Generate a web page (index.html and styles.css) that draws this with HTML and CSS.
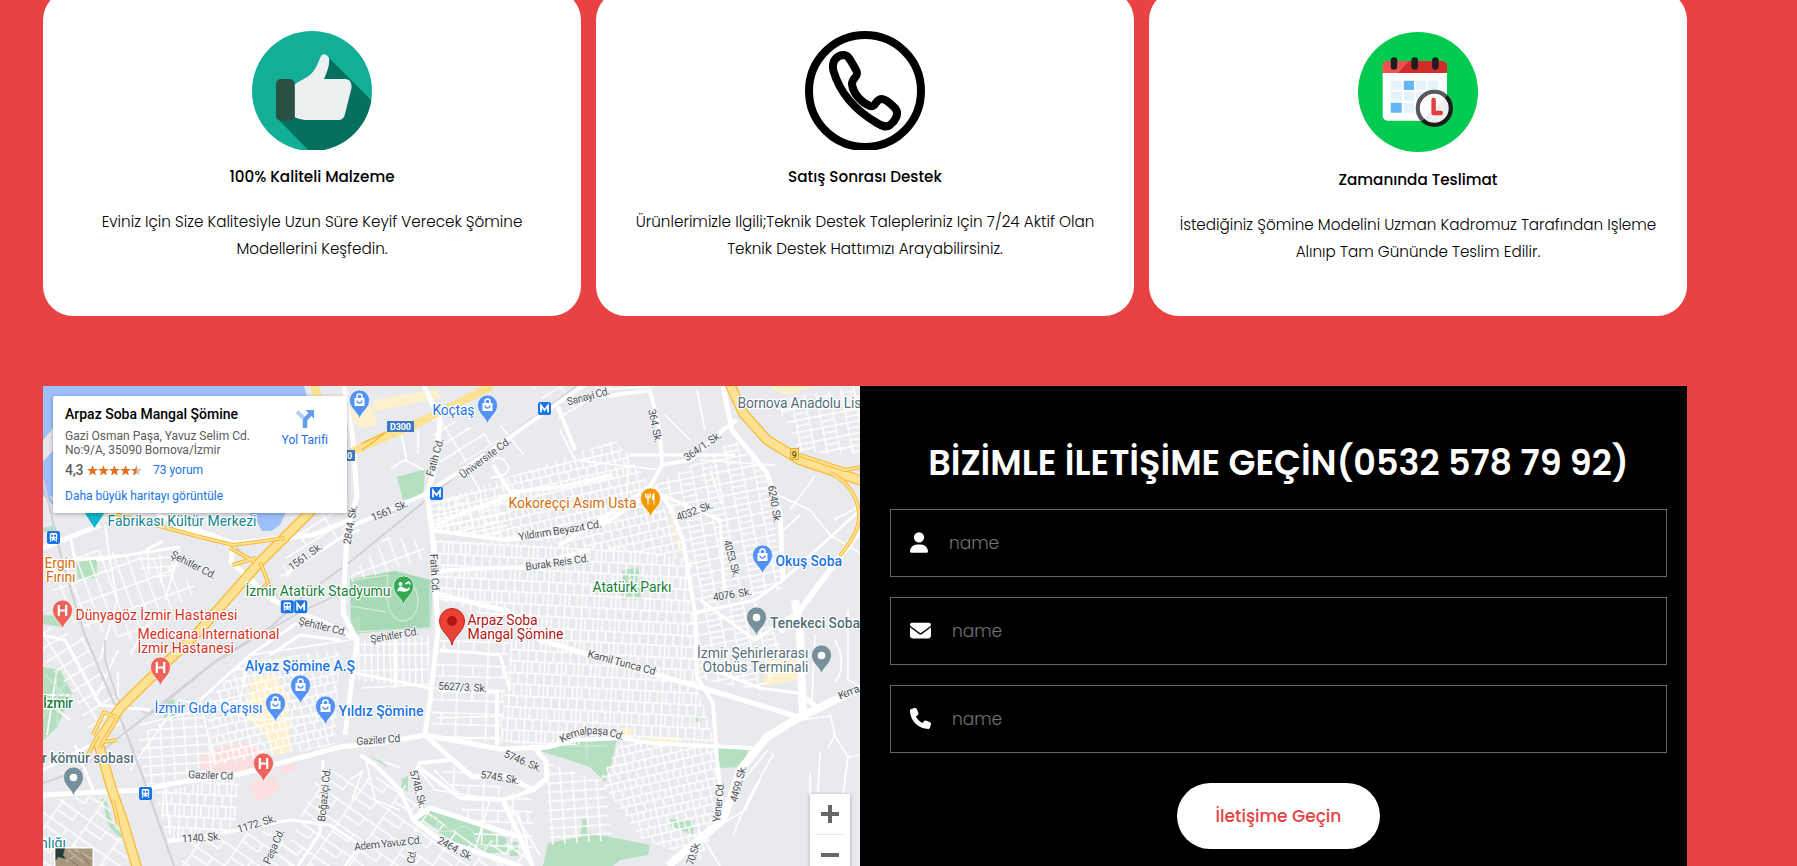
FILE: index.html
```html
<!DOCTYPE html>
<html lang="tr">
<head>
<meta charset="utf-8">
<title>Arpaz Soba Mangal Şömine</title>
<link rel="stylesheet" href="styles.css">
</head>
<body>
<main class="page">
  <section class="features">
    <article class="card card-quality">
      <svg class="card-icon" viewBox="0 0 120 120" width="120" height="120">
        <defs><clipPath id="disc"><circle cx="60" cy="60" r="60"/></clipPath></defs>
        <g clip-path="url(#disc)">
          <rect width="120" height="119" fill="#12ae96"/>
          <path d="M76 26 L124 74 V119 H56 L26 88 L44 60 Z" fill="#06705e"/>
        </g>
        <path d="M42.5 54 C46 50 54 48 59 43 C65 37 67 29 69 25 C71 22 75 23 77 27 C78 34 75 41 72 48 H93 C98 48 100 52 99.500 57 L93 83 C92 87 90 89 86 89 H56 C49 89 45 87 42.500 86 Z" fill="#ecf0f1"/>
        <rect x="24" y="48" width="18.700" height="41.700" rx="5" fill="#2b4f43"/>
      </svg>
      <h3>100% Kaliteli Malzeme</h3>
      <p>Eviniz Için Size Kalitesiyle Uzun Süre Keyif Verecek Şömine<br>Modellerini Keşfedin.</p>
    </article>
    <article class="card card-support">
      <svg class="card-icon" viewBox="0 0 120 120" width="120" height="120">
        <defs><clipPath id="crop"><rect width="120" height="119"/></clipPath></defs>
        <g fill="none" stroke="#000" stroke-width="8" clip-path="url(#crop)">
          <circle cx="60" cy="60" r="56"/>
          <path d="M39 24 C43 24 45 28 51 39 C55 46 47 46 47 53 C48 63 57 72 65 75 C71 77 70 68 77 68 C81 68 87 74 90 77 C95 83 90 90 85 94 C81 97 77 95 72 92 C48 78 34 59 28.500 40 C26 30 32 24 39 24 Z"/>
        </g>
      </svg>
      <h3>Satış Sonrası Destek</h3>
      <p>Ürünlerimizle Ilgili;Teknik Destek Talepleriniz Için 7/24 Aktif Olan<br>Teknik Destek Hattımızı Arayabilirsiniz.</p>
    </article>
    <article class="card card-delivery">
      <svg class="card-icon" viewBox="0 0 120 120" width="120" height="120">
        <circle cx="60" cy="60" r="60" fill="#00cb50"/>
        <rect x="24.700" y="29" width="64.300" height="59.700" rx="5" fill="#fff"/>
        <path d="M24.700 41 V34 Q24.700 29 30 29 H84 Q89 29 89 34 V41 Z" fill="#d32c2c"/>
        <path d="M24.700 41 V34 Q24.700 29 30 29 H51 L40 41 Z" fill="#ef5350"/>
        <path d="M36 28.500 v6 M56.700 28.500 v6 M77.400 28.500 v6" stroke="#1d1d1d" stroke-width="6.500" stroke-linecap="round"/>
        <g fill="#e3f2fd">
          <path d="M32.700 48.700h11v9h-11z M57.800 48.700h10.200v9h-10.200z M69.800 48.700h10.200v9h-10.200z M32.700 59.700h11v9h-11z M45.800 59.700h10.200v9h-10.200z M57.800 59.700h10.200v9h-10.200z M45.800 70.700h10.200v10h-10.200z"/>
        </g>
        <path d="M45.800 48.700h10.200v9.300h-10.200z M32.700 70.700h11v10h-11z" fill="#64b5f6"/>
        <circle cx="76.300" cy="76.300" r="16.500" fill="#fff"/>
        <path d="M88 64.600 A16.500 16.500 0 0 1 64.600 88 Z" fill="#eee"/>
        <path d="M88 64.600 A16.500 16.500 0 0 0 64.600 88" fill="none" stroke="#58595e" stroke-width="4.200"/>
        <path d="M88 64.600 A16.500 16.500 0 0 1 64.600 88" fill="none" stroke="#1d1d1d" stroke-width="4.200"/>
        <path d="M75.600 68 V81 H82.800" fill="none" stroke="#e53b39" stroke-width="4.400" stroke-linecap="round" stroke-linejoin="round"/>
      </svg>
      <h3>Zamanında Teslimat</h3>
      <p>İstediğiniz Şömine Modelini Uzman Kadromuz Tarafından Işleme<br>Alınıp Tam Gününde Teslim Edilir.</p>
    </article>
  </section>

  <section class="contact">
    <div class="map">
      <svg class="map-canvas" viewBox="43 386 817 480" width="817" height="480">
        <defs>
          <pattern id="g1" width="17" height="23" patternUnits="userSpaceOnUse" patternTransform="rotate(3)"><path d="M0 .7H17 M.7 0V23 M9 0V12 M0 12H17 M5 12V23 M13 12V23" class="st"/></pattern>
          <pattern id="g2" width="19" height="17" patternUnits="userSpaceOnUse" patternTransform="rotate(-13)"><path d="M0 .7H19 M.7 0V17 M7 0V9 M14 0V9 M0 9H19 M10 9V17" class="st"/></pattern>
          <pattern id="g3" width="25" height="12" patternUnits="userSpaceOnUse" patternTransform="rotate(-11)"><path d="M0 .7H25 M.7 0V12 M0 6.500H14 M14 0V12" class="st"/></pattern>
          <pattern id="g4" width="6.300" height="26" patternUnits="userSpaceOnUse" patternTransform="rotate(-1)"><path d="M0 .7H6.300 M.7 0V26" class="st"/></pattern>
          <pattern id="g5" width="30" height="24" patternUnits="userSpaceOnUse" patternTransform="rotate(2)"><path d="M0 .7H30 M.7 0V24 M16 0V12 M0 12H30" class="st"/></pattern>
          <pattern id="g6" width="12" height="22" patternUnits="userSpaceOnUse" patternTransform="rotate(-20)"><path d="M0 .7H12 M.7 0V22" class="st"/></pattern>
          <pattern id="g7" width="34" height="20" patternUnits="userSpaceOnUse" patternTransform="rotate(35)"><path d="M0 .7H34 M.7 0V20 M0 10H20 M20 0V10" class="st"/></pattern>
          <pattern id="g8" width="12" height="9" patternUnits="userSpaceOnUse" patternTransform="rotate(-4)"><path d="M0 .7H12 M.7 0V9" class="st"/></pattern>
          <pattern id="g9" width="30" height="13" patternUnits="userSpaceOnUse" patternTransform="rotate(-32)"><path d="M0 .7H30 M.7 0V13" class="st"/></pattern>
          <g id="shop"><path class="pin" d="M0 18.500 C-1.500 11.500 -10 8 -10 -.5 A10 10 0 0 1 10 -.5 C10 8 1.500 11.500 0 18.500Z" fill="#5491f5"/><path d="M-5 -2.500H5V5.500H-5Z" fill="#fff"/><path d="M-2.500 -2.500 V-4 A2.500 2.500 0 0 1 2.500 -4 V-2.500" fill="none" stroke="#fff" stroke-width="1.500"/><path d="M-2.500 0 A2.500 2.500 0 0 0 2.500 0" fill="none" stroke="#5491f5" stroke-width="1.300"/></g>
          <g id="hosp"><path class="pin" d="M0 18.500 C-1.500 11.500 -10 8 -10 -.5 A10 10 0 0 1 10 -.5 C10 8 1.500 11.500 0 18.500Z" fill="#eb6359"/><path d="M-3.700 -5.500V5.500 M3.700 -5.500V5.500 M-3.700 0H3.700" stroke="#fff" stroke-width="2.200"/></g>
          <g id="place"><path class="pin" d="M0 18.500 C-1.500 11.500 -10 8 -10 -.5 A10 10 0 0 1 10 -.5 C10 8 1.500 11.500 0 18.500Z" fill="#78909c"/><circle r="3.800" fill="#fff"/></g>
          <g id="metro"><rect x="-6.500" y="-6.500" width="13" height="13" rx="2" fill="#1a73e8"/><path d="M-3.500 3.800V-3L0 1.500 3.500 -3V3.800" fill="none" stroke="#fff" stroke-width="1.800"/></g>
          <g id="train"><rect x="-6.500" y="-6.500" width="13" height="13" rx="2" fill="#1a73e8"/><rect x="-3.700" y="-4.500" width="7.400" height="7.500" rx="1.500" fill="#fff"/><path d="M-2.500 -2.800h2v2h-2z M.5 -2.800h2v2h-2z M-2.500 .8h1.300v1.200h-1.300z M1.200 .8h1.300v1.200h-1.300z" fill="#1a73e8"/><path d="M-2.500 3 -3.500 4.500 M2.500 3 3.500 4.500" stroke="#fff"/></g>
        </defs>
        <rect x="43" y="386" width="817" height="480" fill="#e8eaed"/>

        <!-- water -->
        <path d="M43 386H304L308 400V505H53L43 495Z" fill="#9dbffb"/>
        <path d="M43 440L60 420V512L48 494 43 495Z" fill="#e3e6ea"/>
        <path d="M43 462L56 447V498L43 494Z" fill="#9dbffb"/>
        <path d="M244 510H287L280 525 271 531 262 531 255 518Z" fill="#9dbffb"/>

        <!-- parks and special areas -->
        <g fill="#b4dfc0">
          <path d="M350 579 395 571 432 580 431 627 351 634Z" fill="#a8d9b6"/>
          <path d="M397 477 425 469 423 496 403 500Z"/>
          <path d="M622 571 638 567 643 600 622 599Z"/>
          <path d="M540 751 587 736 617 738 612 762 605 782 590 767 560 757Z"/>
          <path d="M543 866 548 843 580 837 583 818 587 820 590 833 610 837 650 845 648 855 620 860 613 866Z"/>
          <path d="M418 820 427 811 441 811 506 838 508 852 475 854 455 842Z"/>
          <path d="M717 747 748 750 743 767 718 768Z M402 779 408 776 408 791 401 790Z M510 842H518V856H510Z"/>
          <path d="M43 667 60 670 72 693 57 727 43 741Z"/>
          <path d="M76 562 97 559 97 578 78 579Z M164 703 174 699 177 720 164 720Z M43 528 55 525 57 532 43 532Z M43 615 60 616 63 627 43 624Z"/>
          <path d="M103 799C110 810 104 825 122 836" fill="none" stroke="#b4dfc0" stroke-width="4"/>
          <path d="M670 819 694 821 693 835 671 826Z M695 715H701V722H695Z M350 620 360 616V634H352Z M368 755Q384 762 388 768" />
        </g>
        <path d="M200 755 245 741 266 754 262 772 201 773 197 760Z M248 783 275 774 279 791 258 803Z M280 768 297 761 297 770 280 774Z" fill="#fbe0df"/>
        <path d="M252 677 276 674 288 700 291 752 276 756 263 732 246 718Z M350 395 375 410 376 425 360 428 350 418Z M372 412 440 398 438 389 374 400Z M765 660H797V680L764 686Z M772 386H815L790 395 773 391Z M620 728H632V737H620Z M645 738H680V743H645Z" fill="#fdf0cc"/>
        <path d="M667 520 677 548 685 548 676 520Z" fill="#f5eddb"/>

        <!-- street grids -->
        <path d="M433 540 610 545 692 560 697 685 560 640 440 600Z" fill="url(#g1)"/>
        <path d="M500 480 615 440 655 490 690 560 600 548 433 530 440 500Z" fill="url(#g2)"/>
        <path d="M655 485 735 440 768 475 783 590 697 612 690 560Z" fill="url(#g3)"/>
        <path d="M510 640 560 640 697 685 715 743 620 738 540 750 500 740Z" fill="url(#g1)"/>
        <path d="M545 762 605 782 612 840 550 845Z" fill="url(#g8)"/>
        <path d="M620 742 715 746 720 820 700 860 640 838 600 780Z" fill="url(#g2)"/>
        <path d="M358 640 430 636 428 688 350 680Z" fill="url(#g4)"/>
        <path d="M138 735 200 702 215 770 145 786Z" fill="url(#g8)"/>
        <path d="M155 792 240 776 235 832 168 842Z" fill="url(#g1)"/>
        <path d="M240 662 340 650 335 745 215 765 205 705Z" fill="url(#g2)"/>
        <path d="M343 585 425 560 425 540 385 537Z" fill="url(#g6)"/>
        <path d="M43 625 90 640 130 735 95 745 72 690 43 660Z" fill="url(#g9)"/>
        <path d="M436 640 510 640 500 745 430 735Z" fill="url(#g5)"/>
        <path d="M320 770 400 780 450 830 533 850V866H280Z" fill="url(#g7)"/>
        <path d="M775 400 860 386V455L800 452Z" fill="url(#g3)"/>
        <path d="M43 560 100 550 160 560 200 590 130 640 60 620Z" fill="url(#g6)"/>
        <path d="M140 550 185 560 165 585 140 570Z" fill="url(#g8)"/>
        <path d="M430 410 500 440 460 465 436 462Z M530 386H615L560 420Z M300 505 350 490 340 540 280 580Z" fill="url(#g9)"/>
        <path d="M430 495 505 500 510 538 433 532Z M697 612 755 600 790 660 760 690 700 680Z" fill="url(#g3)"/>
        <path d="M43 800 105 795 130 866H43Z M190 840 270 830 310 866H180Z" fill="url(#g7)"/>
        <path d="M437 760 533 800 533 855 480 845Z" fill="url(#g5)"/>

        <!-- minor streets -->
        <g fill="none" stroke="#fff" stroke-width="1.700">
          <path d="M391 468 405 460 424 470 M400 427 407 462 M418 454V430 M466 467 480 490 483 513 M492 462Q500 453 507 464T490 478 M500 425 524 455 M560 430 575 460 660 470 M600 390 655 386 M628 453 627 500 M690 440 665 415 M697 390 705 430"/>
          <path d="M110 560 117 600 100 660 M118 650 95 700 M180 550 165 600 M118 672 118 700 M150 620 130 655 M105 525 110 560 M45 700 70 720 M57 670 47 735 M43 695 70 695"/>
          <path d="M800 720 830 716 M830 714 835 735 828 748 M833 733 848 757 843 795 M848 757 860 755 M820 752 818 792 M810 772V795 M774 753 748 800 733 835 M768 750 735 790 M720 825 745 810 760 780 M698 830 720 866 M835 640Q848 665 835 682 M815 635 812 700 M848 610V680L860 686"/>
          <path d="M350 780 362 772 352 800 M365 756 375 800 400 810 M385 762 400 768 M418 768 435 790 500 800 M434 770 460 795 M475 850 490 800 M517 810 530 855 M510 806 540 855"/>
          <path d="M130 770 180 700 260 720 330 715 M140 725 240 700 250 655 M200 700 215 765 M165 785 170 835 M250 655 350 640 M360 655 430 655 M362 688 430 684 M437 718 500 716 M438 740 500 737"/>
          <path d="M763 488 810 510 830 535 860 553 M815 476 790 510 M834 520 860 506 M778 535 800 515 M700 460 775 465 M710 470 722 505"/>
        </g>
        <g fill="none" stroke="#cfe9d6" stroke-width="1.300"><path d="M353 580 388 575 386 600 M352 632 430 628V584"/><ellipse cx="403" cy="601" rx="15" ry="20"/><path d="M350 606 386 612 M430 818Q440 813 437 824T455 830Q470 820 475 838T495 840 M565 746H607 M587 738V758 M45 675 70 700 M68 680 43 718 M56 670 58 730"/></g>

        <!-- rail -->
        <g fill="none" stroke="#d0d2d8">
          <path d="M577 386 473 462 345 566 307 593 273 625 213 663 107 747 80 770 43 783" stroke-width="2"/>
          <path d="M43 480 62 560 84 633 122 722 142 775 174 866" stroke-width="2.200"/>
          <path d="M360 585 300 612 215 662 150 715 118 700 105 660V640" stroke-width="1.700"/>
          <path d="M160 526 230 542 262 570 280 600 310 615" stroke-width="1.500"/>
        </g>

        <!-- avenues -->
        <g fill="none" stroke="#fff" stroke-linejoin="round">
          <g stroke-width="5">
            <path d="M424 386 440 420 436 463 427 495 433 540 438 630 430 700 425 733"/>
            <path d="M344 386 353 440 357 497 347 530 343 613 357 640 345 735"/>
            <path d="M43 795 140 790 175 783 240 774 340 747 380 743 425 735 500 749 547 747 575 740"/>
            <path d="M433 593 507 611 540 640 657 675 700 687 798 717"/>
            <path d="M425 735 455 762 473 777 505 775 533 790 547 778 546 762 535 748"/>
            <path d="M503 800 520 838 533 866"/>
            <path d="M413 820 430 808 520 837"/>
            <path d="M413 820 440 840 520 866"/>
            <path d="M723 386 732 430 767 473 780 513 783 580"/>
            <path d="M43 548 100 525"/>
            <path d="M175 528 233 545 231 562 273 600 340 630 357 640"/>
            <path d="M157 515 233 543 313 535 350 520"/>
          </g>
          <g stroke-width="4">
            <path d="M343 530 423 495 470 465 582 386"/>
            <path d="M600 397 650 390 660 433 662 465 650 487 600 520 560 545"/>
            <path d="M662 465 690 460 723 430 737 420"/>
            <path d="M655 487 670 507 683 540 695 613 697 677 713 703 717 760 723 813"/>
            <path d="M430 530 505 540 560 535 610 520 640 500"/>
            <path d="M433 573 450 570 523 567 590 550"/>
            <path d="M558 407 575 450 M493 465 510 492 560 487 612 475"/>
            <path d="M436 525 470 510 520 492"/>
            <path d="M439 690 497 692 497 745"/>
            <path d="M450 760 420 763 414 775 422 810 413 820 400 790 375 765 360 755"/>
            <path d="M420 768 460 798 503 800 533 790"/>
            <path d="M575 740 620 738 650 743 753 748"/>
          </g>
          <g stroke-width="3">
            <path d="M287 577 291 570 345 535 360 530"/>
            <path d="M96 560 180 547 M163 541 145 550 M70 535 75 560 130 555"/>
            <path d="M168 842 240 830 290 820 330 825 360 845 345 866 M323 760 320 833 298 866"/>
            <path d="M297 623 250 655 200 700 M340 640 300 635 270 655"/>
            <path d="M350 672 430 688 M395 638V688 M440 650 500 655 510 690"/>
            <path d="M800 610 755 640 700 600 M630 455 735 455 M650 490 720 520 724 590"/>
            <path d="M695 613 755 600 783 580 860 510"/>
            <path d="M805 694 760 688 700 665"/>
            <path d="M43 635 65 640 100 705 150 710 M43 770 90 745 M75 745 93 790"/>
          </g>
          <path d="M860 530 800 610 780 632" stroke-width="6"/>
          <path d="M795 600 800 630 803 716 M860 688 800 717 767 737 740 770 723 820 683 853 668 866" stroke-width="8"/>
          <path d="M803 696 820 710" stroke-width="5"/>
        </g>

        <!-- motorways -->
        <g fill="none" stroke-linejoin="round">
          <g stroke="#f9b934" stroke-width="10.500">
            <path d="M728 380 743 413 767 440 800 460 862 481"/>
            <path d="M315 507 260 562 200 630 167 662 120 708 98 742 112 790 124 824 137 868"/>
          </g>
          <g stroke="#fde293" stroke-width="8">
            <path d="M728 380 743 413 767 440 800 460 862 481"/>
            <path d="M315 507 260 562 200 630 167 662 120 708 98 742 112 790 124 824 137 868"/>
            <path d="M492 386 420 422 358 449 340 458"/>
            <path d="M312 380 320 402"/>
          </g>
          <g stroke="#f9b934" stroke-width="4">
            <path d="M830 473C855 484 862 510 858 525S845 548 840 556 M800 455 845 470 862 467"/>
            <path d="M100 510 200 537 233 545 285 538"/>
            <path d="M255 562 230 548 M232 565 256 558 M260 562 268 582 262 590 M118 715C116 725 105 735 100 748 M98 735 88 755 M103 742 117 740 M118 718 104 712 93 735 M113 800 118 824"/>
          </g>
          <g stroke="#fde293" stroke-width="2">
            <path d="M830 473C855 484 862 510 858 525S845 548 840 556 M800 455 845 470 862 467"/>
            <path d="M100 510 200 537 233 545 285 538"/>
            <path d="M255 562 230 548 M232 565 256 558 M260 562 268 582 262 590 M118 715C116 725 105 735 100 748 M98 735 88 755 M103 742 117 740 M118 718 104 712 93 735 M113 800 118 824"/>
          </g>
          <path d="M386 432 361 444 M384 434 362 450" stroke="#f9b934" stroke-width="1.500"/>
        </g>

        <!-- road shields -->
        <rect x="387" y="421" width="27" height="11" fill="#3f78c5"/><text x="390" y="430.300" class="shield" textLength="21">D300</text>
        <rect x="338" y="450" width="17" height="11" fill="#3f78c5"/><text x="347" y="459" class="shield">0</text>
        <rect x="790.500" y="448.500" width="8" height="11" fill="#fbd667" stroke="#dcae3c"/><text x="791.800" y="457.700" class="shield dark">9</text>

        <!-- street names -->
        <g class="street">
          <text transform="translate(170 557) rotate(27)" textLength="49">Şehitler Cd.</text>
          <text transform="translate(298 624) rotate(14)" textLength="49">Şehitler Cd.</text>
          <text transform="translate(371 643) rotate(-10)" textLength="49">Şehitler Cd.</text>
          <text transform="translate(350.500 545) rotate(-80)" textLength="40">2844. Sk.</text>
          <text transform="translate(291.500 571) rotate(-36)" textLength="39">1561. Sk.</text>
          <text transform="translate(373 521.500) rotate(-23)" textLength="39">1561. Sk.</text>
          <text transform="translate(433 477) rotate(-74)" textLength="39">Fatih Cd.</text>
          <text transform="translate(430 554) rotate(87)" textLength="39">Fatih Cd.</text>
          <text transform="translate(463 479) rotate(-37)" textLength="61">Üniversite Cd.</text>
          <text transform="translate(568 405.500) rotate(-15)" textLength="44">Sanayi Cd.</text>
          <text transform="translate(519 540.500) rotate(-9)" textLength="84">Yıldırım Beyazıt Cd.</text>
          <text transform="translate(526 570.500) rotate(-8)" textLength="64">Burak Reis Cd.</text>
          <text transform="translate(587 657) rotate(15)" textLength="70">Kamil Tunca Cd</text>
          <text transform="translate(438 689.500) rotate(3)" textLength="49">5627/3. Sk.</text>
          <text transform="translate(188 778) rotate(2)" textLength="45">Gaziler Cd</text>
          <text transform="translate(356.500 745) rotate(-4)" textLength="44">Gaziler Cd</text>
          <text transform="translate(503 756.500) rotate(23)" textLength="40">5746. Sk.</text>
          <text transform="translate(480 778) rotate(9)" textLength="39">5745. Sk.</text>
          <text transform="translate(409.500 771) rotate(75)" textLength="39">5748. Sk.</text>
          <text transform="translate(436.500 842.500) rotate(29)" textLength="39">2464. Sk.</text>
          <text transform="translate(354.500 850.500) rotate(-6)" textLength="68">Adem Yavuz Cd.</text>
          <text transform="translate(414 864) rotate(-80)" textLength="13">Cd.</text>
          <text transform="translate(182 842.500) rotate(-4)" textLength="39">1140. Sk.</text>
          <text transform="translate(238.500 833) rotate(-17)" textLength="40">1172. Sk.</text>
          <text transform="translate(325 822) rotate(-84)" textLength="54">Boğaziçi Cd.</text>
          <text transform="translate(269.500 865) rotate(-66)" textLength="37">Paşa Cd.</text>
          <text transform="translate(648 410) rotate(78)" textLength="34">364. Sk.</text>
          <text transform="translate(687 461.500) rotate(-35)" textLength="43">364/1. Sk.</text>
          <text transform="translate(678 521) rotate(-20)" textLength="38">4032. Sk.</text>
          <text transform="translate(768 486) rotate(81)" textLength="38">6240. Sk.</text>
          <text transform="translate(723.500 541) rotate(75)" textLength="38">4053. Sk.</text>
          <text transform="translate(713.500 601) rotate(-9)" textLength="39">4076. Sk.</text>
          <text transform="translate(840 699.500) rotate(-22)" textLength="22">Kema</text>
          <text transform="translate(720 822.500) rotate(-84)" textLength="40">Yener Cd.</text>
          <text transform="translate(737 802.500) rotate(-75)" textLength="37">4499. Sk.</text>
          <text transform="translate(693 866) rotate(-72)" textLength="24">70. Sk.</text>
          <path id="kemal" d="M562 743 Q590 726 624 741" fill="none" stroke="none"/>
          <text textLength="63"><textPath href="#kemal">Kemalpaşa Cd.</textPath></text>
        </g>

        <!-- pins -->
        <use href="#shop" x="359.500" y="400.500"/><use href="#shop" x="487.500" y="405.500"/><use href="#shop" x="762.500" y="555.500"/>
        <use href="#shop" x="300.500" y="685.500"/><use href="#shop" x="275.500" y="703.500"/><use href="#shop" x="325.500" y="706.500"/>
        <use href="#hosp" x="62.500" y="610.500"/><use href="#hosp" x="160.500" y="667.500"/><use href="#hosp" x="263.500" y="763.500"/>
        <use href="#place" x="756.500" y="617.500"/><use href="#place" x="821.500" y="655.500"/><use href="#place" x="73.500" y="777.500"/>
        <use href="#metro" x="544.500" y="408.500"/><use href="#metro" x="436.500" y="493.500"/><use href="#metro" x="300.700" y="606.700"/>
        <use href="#train" x="287.300" y="606.700"/><use href="#train" x="53.500" y="537.500"/><use href="#train" x="145.500" y="793.500"/>
        <path d="M84 512H105L94.500 528Z" fill="#12b5cb"/>
        <g transform="translate(650.500 498.500)"><path class="pin" d="M0 18.500 C-1.500 11.500 -10 8 -10 -.5 A10 10 0 0 1 10 -.5 C10 8 1.500 11.500 0 18.500Z" fill="#f29900"/><path d="M-2.500 -1V6 M-4.800 -5V-2Q-2.500 1 -.2 -2V-5 M-2.500 -5V0" fill="none" stroke="#fff" stroke-width="1.300"/><path d="M3.500 6V-5Q1.500 -4 1.800 1H3.500" fill="#fff" stroke="#fff"/></g>
        <g transform="translate(403.500 586.500)"><path class="pin" d="M0 18.500 C-1.500 11.500 -10 8 -10 -.5 A10 10 0 0 1 10 -.5 C10 8 1.500 11.500 0 18.500Z" fill="#34a853"/><path d="M-6 3.500Q-4 -2 0 1T6 0V3Q3 6 -1 5T-6 5Z" fill="#fff"/><circle cx="-3" cy="-2.500" r="1.900" fill="#fff"/><path d="M2 -2.500 5 -4.500 7 -2" fill="none" stroke="#fff" stroke-width="1.600"/></g>
        <g transform="translate(452 621)"><path d="M0 24 C-1.500 15 -12.500 10 -12.500 0 A12.500 12.500 0 0 1 12.500 0 C12.500 10 1.500 15 0 24Z" fill="#ea4335" stroke="#c5221f"/><circle r="5" fill="#b31412"/></g>

        <!-- place names -->
        <g class="poi">
          <g fill="#12858f"><text x="107.500" y="526" textLength="149">Fabrikası Kültür Merkezi</text><text x="40" y="848">nlığı</text></g>
          <g fill="#d56e0c"><text x="44.500" y="568" textLength="31">Ergin</text><text x="46" y="582" textLength="29.500">Fırını</text><text x="508.500" y="508" textLength="128">Kokoreççi Asım Usta</text></g>
          <g fill="#d93025"><text x="75.500" y="620" textLength="162">Dünyagöz İzmir Hastanesi</text><text x="137.500" y="639" textLength="142">Medicana International</text><text x="137.500" y="653" textLength="96.500">İzmir Hastanesi</text></g>
          <g fill="#1a73e8"><text x="154.500" y="713" textLength="108">İzmir Gıda Çarşısı</text><text x="432.500" y="415" textLength="42">Koçtaş</text>
            <text class="mid" x="245" y="671" textLength="110">Alyaz Şömine A.Ş</text><text class="mid" x="338.500" y="716" textLength="85">Yıldız Şömine</text><text class="mid" x="775.500" y="565.500" textLength="66.500">Okuş Soba</text></g>
          <g fill="#188038"><text class="mid" x="43" y="708" textLength="30">İzmir</text><text x="245.500" y="596" textLength="145">İzmir Atatürk Stadyumu</text><text x="592.500" y="591.500" textLength="79">Atatürk Parkı</text></g>
          <g fill="#546e7a"><text class="mid" x="42" y="763" textLength="92">r kömür sobası</text><text x="737.500" y="407.500" textLength="124">Bornova Anadolu Lis</text><text class="mid" x="770" y="627.500" textLength="90">Tenekeci Soba</text><text x="697" y="658" textLength="111.500">İzmir Şehirlerarası</text><text x="702.500" y="672" textLength="106">Otobüs Terminali</text></g>
          <g fill="#b31412"><text x="467.500" y="624.500" textLength="70">Arpaz Soba</text><text x="467.500" y="638.500" textLength="96">Mangal Şömine</text></g>
        </g>
      </svg>

      <div class="place-card">
        <div class="place-info">
          <strong>Arpaz Soba Mangal Şömine</strong>
          <address>Gazi Osman Paşa, Yavuz Selim Cd.<br>No:9/A, 35090 Bornova/İzmir</address>
          <div class="rating">
            <b>4,3</b>
            <svg viewBox="0 0 55 11" width="55" height="11">
              <defs><path id="star" d="M5.500 .2 6.900 4 11 4.100 7.800 6.600 8.900 10.500 5.500 8.200 2.100 10.500 3.200 6.600 0 4.100 4.100 4Z"/><clipPath id="half"><path d="M0 0H5.500V11H0Z"/></clipPath></defs>
              <g fill="#e7711b"><use href="#star"/><use href="#star" x="11"/><use href="#star" x="22"/><use href="#star" x="33"/></g>
              <g transform="translate(44 0)"><use href="#star" fill="#c8c8c8"/><g clip-path="url(#half)"><use href="#star" fill="#e7711b"/></g></g>
            </svg>
            <a>73 yorum</a>
          </div>
          <a class="bigger">Daha büyük haritayı görüntüle</a>
        </div>
        <div class="directions">
          <svg viewBox="0 0 18 18" width="18" height="18"><path d="M1 1.500 8 8.500" stroke="#b3d1f4" stroke-width="4"/><path d="M9 18V11Q9 9.500 10.500 8L14.500 4" fill="none" stroke="#649ee5" stroke-width="4.500"/><path d="M9.500 0H18V8.500Z" fill="#649ee5"/></svg>
          <a>Yol Tarifi</a>
        </div>
      </div>

      <svg class="satellite" viewBox="0 0 40 20" width="40" height="20">
        <rect width="40" height="20" fill="#fff"/><rect x="1.500" y="1.500" width="37" height="19" fill="#a8967f"/>
        <path d="M1.500 1.500H11L9 8 12 12 4 10 1.500 14Z" fill="#263d3e"/><path d="M14 3 30 16 M20 2 38 12 M12 15 22 8" stroke="#c5b5a0" stroke-width="1.500"/><path d="M26 5 36 18 M15 12 24 19" stroke="#837362"/>
      </svg>
      <svg class="zoom" viewBox="0 0 40 80" width="40" height="80">
        <rect width="40" height="80" fill="#fff"/><path d="M11 20H29 M20 11V29 M11 61H29" stroke="#666" stroke-width="4"/><path d="M5 40.500H35" stroke="#e6e6e6"/>
      </svg>
    </div>

    <form class="panel">
      <h2>BİZİMLE İLETİŞİME GEÇİN(0532 578 79 92)</h2>
      <label class="field">
        <svg viewBox="0 0 448 512" width="18" height="21"><path fill="#fff" d="M224 256a128 128 0 1 0 0-256 128 128 0 1 0 0 256zm-46 48C80 304 0 384 0 482c0 17 13 30 30 30h388c17 0 30-13 30-30 0-98-80-178-178-178z"/></svg>
        <input type="text" placeholder="name">
      </label>
      <label class="field">
        <svg viewBox="0 0 512 512" width="21" height="21"><path fill="#fff" d="M48 64C21 64 0 86 0 112c0 15 7 29 19 38l218 163c11 9 27 9 38 0l218-163c12-9 19-23 19-38 0-26-21-48-48-48zM0 176v208c0 35 29 64 64 64h384c35 0 64-29 64-64V176L294 339c-23 17-53 17-76 0z"/></svg>
        <input type="text" placeholder="name">
      </label>
      <label class="field">
        <svg viewBox="0 0 512 512" width="21" height="21"><path fill="#fff" d="M165 25c-8-19-29-29-49-24L28 25C12 29 0 44 0 61c0 249 202 451 451 451 17 0 32-12 36-28l24-88c5-20-5-41-24-49l-96-40c-16-7-35-2-46 12l-41 49c-70-33-127-90-160-160l49-40c14-12 19-30 12-47z"/></svg>
        <input type="text" placeholder="name">
      </label>
      <button type="button">İletişime Geçin</button>
    </form>
  </section>
</main>
</body>
</html>
```

FILE: styles.css
```css
* { box-sizing: border-box; margin: 0; padding: 0; }

body {
  height: 866px;
  overflow: hidden;
  background: #e84242;
  font-family: Poppins, Inter, sans-serif;
}

.page { width: 1644px; margin-left: 43px; }

.features {
  display: grid;
  grid-template-columns: repeat(3, 538px);
  gap: 15px;
  margin-top: -10px;
}

.card {
  height: 326px;
  padding-top: 41px;
  border-radius: 30px;
  background: #fff;
  color: #000;
  text-align: center;
}
.card-icon { display: block; margin: 0 auto 15px; }
.card h3 { font-size: 15.2px; font-weight: 500; line-height: 22px; }
.card p { margin-top: 20px; font-size: 15.2px; font-weight: 300; line-height: 27px; white-space: nowrap; }
.card-delivery { padding-top: 42px; }
.card-delivery .card-icon { margin-bottom: 17px; }

.contact {
  display: grid;
  grid-template-columns: 817px 827px;
  height: 480px;
  margin-top: 70px;
}

.map { position: relative; overflow: hidden; font-family: Roboto, sans-serif; }
.map-canvas { display: block; }
.st { fill: none; stroke: #fff; stroke-width: 1.4; }
.pin { stroke: #fff; stroke-width: .6; }
.street text {
  font-size: 10.7px;
  fill: #4f5358;
  stroke: #f4f5f6;
  stroke-width: 2px;
  paint-order: stroke;
}
.poi text {
  font-size: 14px;
  stroke: #fff;
  stroke-width: 2.5px;
  stroke-linejoin: round;
  paint-order: stroke;
}
.poi .mid { font-weight: 500; }
.shield { font-size: 9px; font-weight: 700; fill: #fff; }
.shield.dark { font-weight: 500; fill: #5c4a16; }

.place-card {
  position: absolute;
  left: 10px;
  top: 10px;
  display: flex;
  justify-content: space-between;
  width: 294px;
  height: 117px;
  padding: 10px 19px 0 12px;
  border-radius: 2px;
  background: #fff;
  box-shadow: 0 1px 4px rgba(0, 0, 0, .3);
  font-size: 12px;
  color: #1a73e8;
}
.place-info { white-space: nowrap; }
.place-info strong { display: block; font-size: 14px; font-weight: 500; line-height: 16px; color: #000; }
.place-info address { margin-top: 7px; font-style: normal; line-height: 14px; color: #5b5b5b; }
.rating { display: flex; align-items: center; height: 20px; margin-top: 3px; }
.rating b { width: 22px; font-size: 14px; font-weight: 500; color: #5e5e5e; letter-spacing: -.3px; }
.rating a { margin-left: 11px; }
.bigger { display: block; margin-top: 9px; line-height: 14px; }
.directions { display: flex; flex-direction: column; align-items: center; gap: 5px; padding-top: 4px; }
.directions a { line-height: 14px; }

.satellite { position: absolute; left: 11px; top: 461px; }
.zoom { position: absolute; left: 767px; top: 408px; box-shadow: 0 1px 4px rgba(0, 0, 0, .3); }

.panel {
  display: flex;
  flex-direction: column;
  align-items: center;
  padding: 52px 20px 0 30px;
  background: #000;
}
.panel h2 {
  margin-bottom: 21px;
  font-size: 35px;
  font-weight: 600;
  line-height: 50px;
  color: #fff;
  white-space: nowrap;
}
.field {
  display: flex;
  align-items: center;
  gap: 21px;
  width: 777px;
  height: 68px;
  margin-bottom: 20px;
  padding: 0 19px;
  border: 1px solid #666;
}
.field svg { flex: none; margin-top: -2px; }
.field input {
  flex: 1;
  border: 0;
  background: transparent;
  font: 300 17px Poppins, Inter, sans-serif;
}
.field input::placeholder { color: #757575; opacity: 1; }
.panel button {
  width: 203px;
  height: 66px;
  margin-top: 10px;
  border: 0;
  border-radius: 33px;
  background: #fff;
  color: #e84242;
  font: 500 17px Poppins, Inter, sans-serif;
}
```
